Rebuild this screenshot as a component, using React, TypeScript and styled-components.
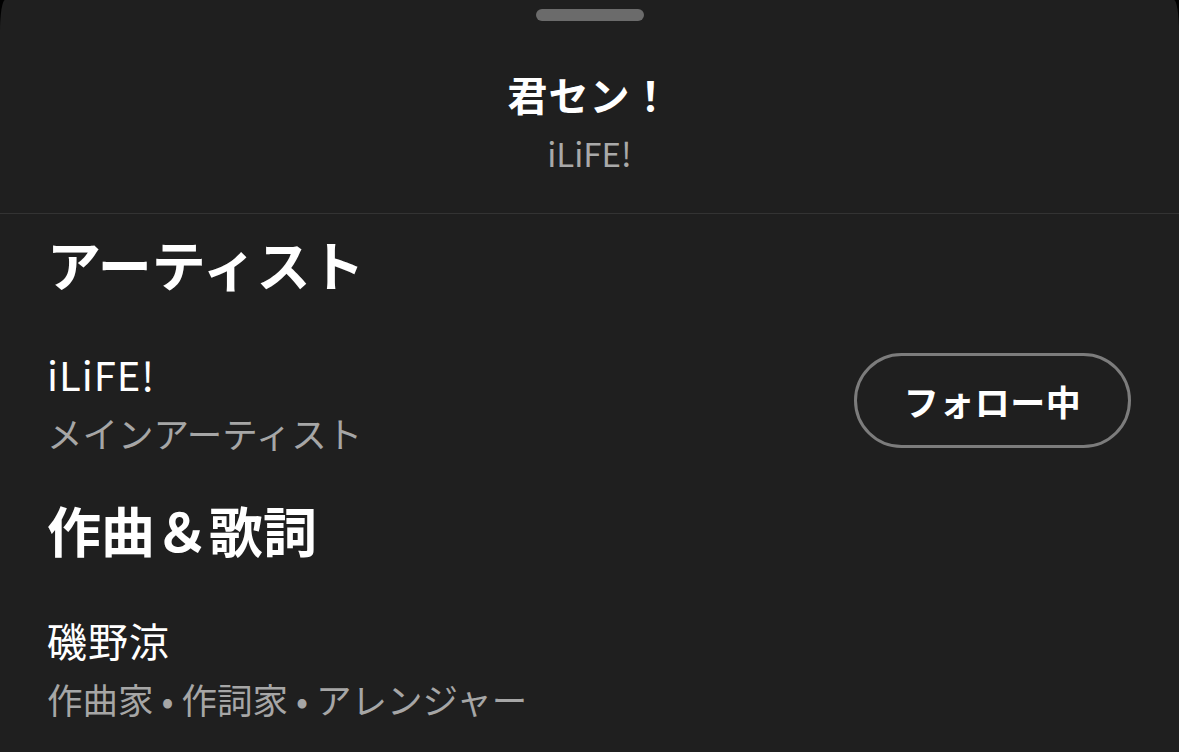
import styled, { createGlobalStyle } from "styled-components";

const GlobalStyle = createGlobalStyle`
  html, body {
    margin: 0;
    padding: 0;
    background: #000;
  }
  body {
    font-family: "Noto Sans CJK JP", "Noto Sans", sans-serif;
    -webkit-font-smoothing: antialiased;
  }
`;

const credits = [
  {
    section: "アーティスト",
    people: [{ name: "iLiFE!", roles: ["メインアーティスト"], following: true }],
  },
  {
    section: "作曲＆歌詞",
    people: [{ name: "磯野涼", roles: ["作曲家", "作詞家", "アレンジャー"], following: false }],
  },
];

const CreditsSheet = () => {
  return (
    <Sheet>
      <GlobalStyle />
      <Header>
        <Handle />
        <TrackTitle>君セン！</TrackTitle>
        <TrackArtist>iLiFE!</TrackArtist>
      </Header>
      <Body>
        {credits.map((group, gi) => (
          <Group key={gi}>
            <SectionTitle>{group.section}</SectionTitle>
            {group.people.map((person, pi) => (
              <PersonRow key={pi}>
                <PersonInfo>
                  <PersonName>{person.name}</PersonName>
                  <PersonRoles>{person.roles.join(" • ")}</PersonRoles>
                </PersonInfo>
                {person.following && <FollowButton>フォロー中</FollowButton>}
              </PersonRow>
            ))}
          </Group>
        ))}
      </Body>
    </Sheet>
  );
};

const Sheet = styled.div`
  min-height: 100vh;
  background: #1f1f1f;
  border-top-left-radius: 5px 32px;
  border-top-right-radius: 5px 32px;
  color: #fff;
  overflow: hidden;
`;

const Header = styled.div`
  display: flex;
  flex-direction: column;
  align-items: center;
  padding: 9px 0 40px;
  border-bottom: 1px solid #333333;
`;

const Handle = styled.div`
  width: 108px;
  height: 12px;
  border-radius: 6px;
  background: #6b6b6b;
  margin-bottom: 50px;
`;

const TrackTitle = styled.div`
  font-size: 40px;
  line-height: 46px;
  font-weight: 700;
  letter-spacing: 1px;
`;

const TrackArtist = styled.div`
  margin-top: 16px;
  font-size: 33px;
  line-height: 40px;
  color: #a9a9a9;
`;

const Body = styled.div`
  display: flex;
  flex-direction: column;
  gap: 45px;
  padding: 19px 48px 0 47px;
`;

const Group = styled.div`
  display: flex;
  flex-direction: column;
`;

const SectionTitle = styled.div`
  font-size: 54px;
  line-height: 62px;
  font-weight: 700;
  margin-bottom: 55px;
`;

const PersonRow = styled.div`
  display: flex;
  align-items: center;
  justify-content: space-between;
`;

const PersonInfo = styled.div`
  display: flex;
  flex-direction: column;
  gap: 14px;
`;

const PersonName = styled.div`
  font-size: 40px;
  line-height: 48px;
  letter-spacing: 1px;
`;

const PersonRoles = styled.div`
  font-size: 35.5px;
  line-height: 42px;
  color: #a6a6a6;
`;

const FollowButton = styled.button`
  width: 277px;
  height: 95px;
  border: 3px solid #7c7c7c;
  border-radius: 48px;
  background: transparent;
  color: #fff;
  font-family: "Noto Sans CJK JP", "Noto Sans", sans-serif;
  font-size: 35px;
  font-weight: 700;
  letter-spacing: 0.5px;
  padding: 0;
  margin-top: -4px;
`;

export default CreditsSheet;
